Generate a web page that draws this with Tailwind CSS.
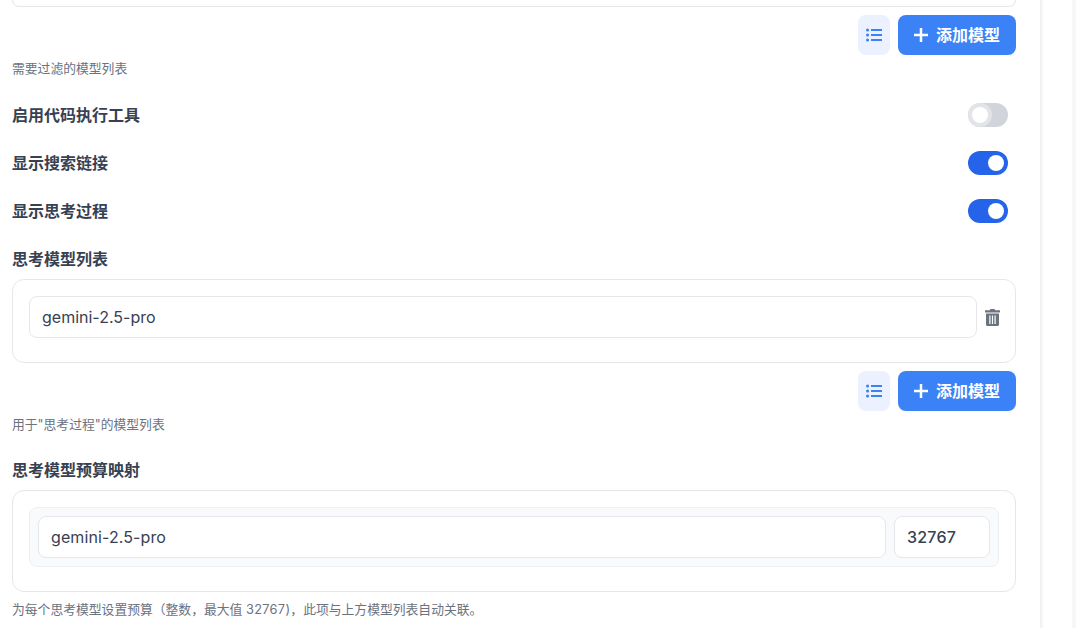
<!DOCTYPE html>
<html lang="zh-CN">
<head>
<meta charset="utf-8">
<script src="https://cdn.jsdelivr.net/npm/@tailwindcss/browser@4"></script>
<title>设置</title>
</head>
<body class="bg-white">
<div class="flex h-[628px] w-[1076px] overflow-hidden bg-white text-[#374151] font-['Inter','Noto_Sans_CJK_SC',sans-serif]">
  <main class="w-[1040px] shrink-0 px-3">
    <div class="h-[7px] w-[1004px] rounded-b-xl border-x border-b border-[#e5e7eb]"></div>
    <div class="mt-2 flex w-[1004px] justify-end gap-2">
      <button class="flex h-10 w-8 items-center justify-center rounded-lg bg-[#ebf1fe] text-[#3b82f6]">
        <svg width="16" height="16" viewBox="0 0 16 16" fill="none" stroke="currentColor" stroke-width="2"><path d="M5 3h11M5 8h11M5 13h11"/><path d="M1.500 3h.1M1.500 8h.1M1.500 13h.1" stroke-width="3" stroke-linecap="round"/></svg>
      </button>
      <button class="flex h-10 w-[118px] items-center justify-center gap-2 rounded-lg bg-[#3b82f6] text-base font-semibold text-white">
        <svg width="14" height="14" viewBox="0 0 14 14" fill="none" stroke="currentColor" stroke-width="2.500"><path d="M7 0v14M0 7h14"/></svg>
        <span>添加模型</span>
      </button>
    </div>
    <p class="mt-1 text-[12.800px] leading-[19px] text-[#6b7280]">需要过滤的模型列表</p>

    <div class="mt-[25px] flex h-6 w-[996px] items-center justify-between text-base font-semibold">
      <span>启用代码执行工具</span>
      <div class="flex h-6 w-10 items-center rounded-full bg-[#d1d5db]">
        <div class="flex h-6 w-6 items-center justify-center rounded-full bg-[#e2e4e8]"><div class="h-4 w-4 rounded-full bg-white"></div></div>
      </div>
    </div>
    <div class="mt-6 flex h-6 w-[996px] items-center justify-between text-base font-semibold">
      <span>显示搜索链接</span>
      <div class="flex h-6 w-10 items-center justify-end rounded-full bg-[#2563eb] pr-1"><div class="h-4 w-4 rounded-full bg-white"></div></div>
    </div>
    <div class="mt-6 flex h-6 w-[996px] items-center justify-between text-base font-semibold">
      <span>显示思考过程</span>
      <div class="flex h-6 w-10 items-center justify-end rounded-full bg-[#2563eb] pr-1"><div class="h-4 w-4 rounded-full bg-white"></div></div>
    </div>

    <h3 class="mt-6 h-6 text-base font-semibold leading-6">思考模型列表</h3>
    <div class="mt-2 w-[1004px] rounded-xl border border-[#e5e7eb] p-4">
      <div class="mb-2 flex items-center gap-2">
        <div class="flex h-[42px] flex-1 items-center rounded-lg border border-[#e5e7eb] px-3 text-base">gemini-2.5-pro</div>
        <svg class="h-[17px] w-[15px] -mr-px text-[#6b7280]" viewBox="0 0 15 17" fill="currentColor"><path d="M4.800 1.200 5.500 0h4l.7 1.200H15V3.400H0V1.200h4.800Z"/><path fill-rule="evenodd" d="M1 4.400h13v11a1.600 1.600 0 0 1-1.600 1.600H2.600A1.600 1.600 0 0 1 1 15.400V4.400Zm3.300 2v8.600h1.200V6.400H4.300Zm2.600 0v8.600h1.200V6.400H6.900Zm2.600 0v8.600h1.200V6.400H9.500Z"/></svg>
      </div>
    </div>
    <div class="mt-2 flex w-[1004px] justify-end gap-2">
      <button class="flex h-10 w-8 items-center justify-center rounded-lg bg-[#ebf1fe] text-[#3b82f6]">
        <svg width="16" height="16" viewBox="0 0 16 16" fill="none" stroke="currentColor" stroke-width="2"><path d="M5 3h11M5 8h11M5 13h11"/><path d="M1.500 3h.1M1.500 8h.1M1.500 13h.1" stroke-width="3" stroke-linecap="round"/></svg>
      </button>
      <button class="flex h-10 w-[118px] items-center justify-center gap-2 rounded-lg bg-[#3b82f6] text-base font-semibold text-white">
        <svg width="14" height="14" viewBox="0 0 14 14" fill="none" stroke="currentColor" stroke-width="2.500"><path d="M7 0v14M0 7h14"/></svg>
        <span>添加模型</span>
      </button>
    </div>
    <p class="mt-1 text-[12.800px] leading-[19px] text-[#6b7280]">用于"思考过程"的模型列表</p>

    <h3 class="mt-6 h-6 text-base font-semibold leading-6">思考模型预算映射</h3>
    <div class="mt-2 w-[1004px] rounded-xl border border-[#e5e7eb] p-4">
      <div class="mb-2 flex gap-2 rounded-lg border border-[#eeeff1] bg-[#f9fafb] p-2">
        <div class="flex h-[42px] flex-1 items-center rounded-lg border border-[#e5e7eb] bg-white px-3 text-base tracking-[0.1px]">gemini-2.5-pro</div>
        <div class="flex h-[42px] w-24 items-center rounded-lg border border-[#e5e7eb] bg-white px-3 text-base font-medium tracking-[0.2px]">32767</div>
      </div>
    </div>
    <p class="mt-2 text-[12.800px] leading-[19px] text-[#6b7280]">为每个思考模型设置预算（整数，最大值 <span class="tracking-[0.3px]">32767)</span>，此项与上方模型列表自动关联。</p>
  </main>
  <div class="flex w-[36px] shrink-0 justify-between">
    <div class="w-1 bg-gradient-to-r from-[#eeeeee] to-white"></div>
    <div class="w-1 bg-[#f7f7f7]"></div>
  </div>
</div>
</body>
</html>
